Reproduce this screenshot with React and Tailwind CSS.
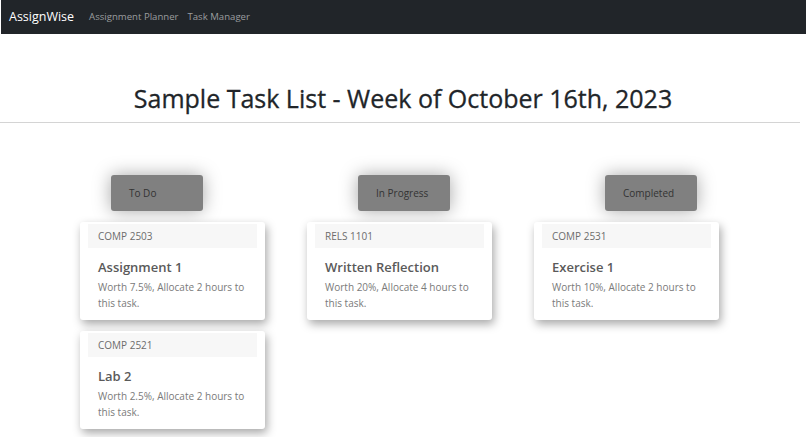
import React from "react";

const font = { fontFamily: '"Open Sans", "Noto Sans", sans-serif' };

function Card({ code, title, worth, hours }) {
  return (
    <div className="w-[185px] bg-white rounded-[3px] shadow-[2px_4px_10px_rgba(0,0,0,0.35)] pt-[2px] pb-[9px]">
      <div className="mx-[8px] h-[24px] bg-[#f7f7f7] flex items-center pl-[10px] text-[10px] text-[#6c6c6c]">
        {code}
      </div>
      <div className="px-[18px] pt-[10px]">
        <div className="text-[13px] font-semibold text-[#5a5a5a] leading-[18px]">{title}</div>
        <div className="mt-[3px] text-[10px] text-[#7a7a7a] leading-[16px]">
          Worth {worth}, Allocate {hours} hours to this task.
        </div>
      </div>
    </div>
  );
}

function Status({ label }) {
  return (
    <div className="w-[92px] h-[36px] bg-[#808080] rounded-[3px] flex items-center pl-[18px] text-[10px] text-[#333333] shadow-[0_0_18px_rgba(0,0,0,0.35)]">
      {label}
    </div>
  );
}

export default function App() {
  return (
    <div className="w-[806px] h-[437px] bg-white overflow-hidden" style={font}>
      <nav className="ml-px h-[34px] bg-[#212529] flex items-center pl-[8px]">
        <span className="text-white text-[12.5px] mr-[15px]">AssignWise</span>
        <span className="text-[#9b9d9f] text-[9.6px] mr-[9px]">Assignment Planner</span>
        <span className="text-[#9b9d9f] text-[9.6px]">Task Manager</span>
      </nav>
      <h1 className="mt-[48px] text-center text-[25px] leading-[32px] text-[#212529] font-medium [-webkit-text-stroke:0.3px_#212529]">
        Sample Task List - Week of October 16th, 2023
      </h1>
      <div className="mt-[8px] w-[800px] h-px bg-[#d4d4d4]" />
      <div className="mt-[52px] flex pl-[111px] gap-[155px]">
        <Status label="To Do" />
        <Status label="In Progress" />
        <Status label="Completed" />
      </div>
      <div className="mt-[11px] flex pl-[80px] gap-[42px] items-start">
        <div className="flex flex-col gap-[11px]">
          <Card code="COMP 2503" title="Assignment 1" worth="7.5%" hours="2" />
          <Card code="COMP 2521" title="Lab 2" worth="2.5%" hours="2" />
        </div>
        <Card code="RELS 1101" title="Written Reflection" worth="20%" hours="4" />
        <Card code="COMP 2531" title="Exercise 1" worth="10%" hours="2" />
      </div>
    </div>
  );
}
